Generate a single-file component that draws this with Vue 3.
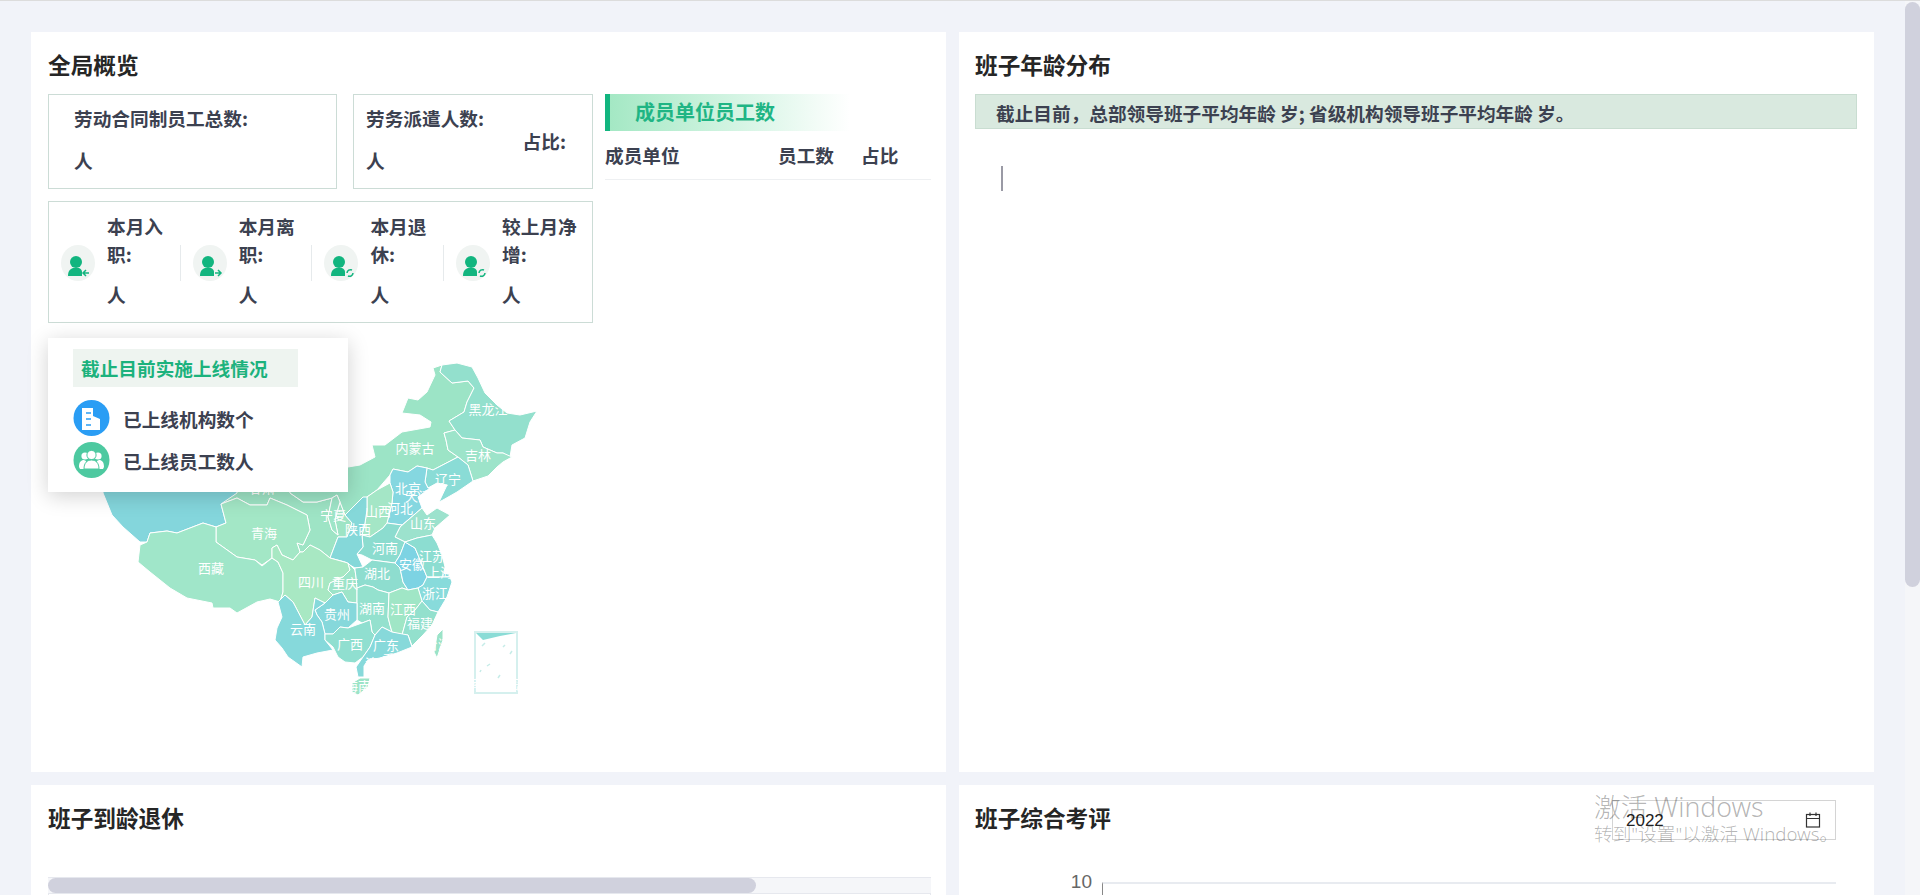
<template>
  <div class="page">
    <main class="board">
      <section class="card left">
        <h2 class="card-title">全局概览</h2>
        <div class="overview">
          <div class="overview-left">
            <div class="stat-row">
              <div class="stat-box total">
                <div>
                  <div class="line">劳动合同制员工总数:</div>
                  <div class="line value">人</div>
                </div>
              </div>
              <div class="stat-box dispatch">
                <div>
                  <div class="line">劳务派遣人数:</div>
                  <div class="line value">人</div>
                </div>
                <div class="line ratio">占比:</div>
              </div>
            </div>

            <div class="month-box">
              <div v-for="m in monthStats" :key="m.label" class="month-item">
                <svg class="person" viewBox="0 0 34 36" width="34" height="36">
                  <ellipse cx="17" cy="18" rx="17" ry="18" fill="#f0f4f2" />
                  <circle cx="15" cy="17" r="6" fill="#12b57f" />
                  <path d="M7 31c0-5 2-7 5-8h6c2 1 3 2 3 4v4z" fill="#12b57f" />
                  <path v-if="m.badge === 'in'" d="M28 28h-6m3-3-3 3 3 3" fill="none" stroke="#12b57f" stroke-width="1.5" />
                  <path v-else-if="m.badge === 'out'" d="M22 28h6m-3-3 3 3-3 3" fill="none" stroke="#12b57f" stroke-width="1.5" />
                  <path v-else d="M23 28a3.500 3.500 0 0 1 5-3M29 28a3.500 3.500 0 0 1-5 3" fill="none" stroke="#12b57f" stroke-width="1.5" />
                </svg>
                <div class="month-text">
                  <div class="line">{{ m.label }}:</div>
                  <div class="line value">人</div>
                </div>
              </div>
            </div>

            <div class="map-wrap">
              <svg class="map" viewBox="100 350 470 370" width="470" height="370">
                <g class="map-shapes">
                  <polygon
                    v-for="p in provinces"
                    :key="p.name"
                    :points="p.points"
                    :fill="p.color"
                    stroke="#fff"
                    stroke-width="1"
                    stroke-linejoin="round"
                  />
                  <rect x="475" y="632" width="42" height="61" fill="none" stroke="#d5f0ee" stroke-width="2" />
                  <polygon points="476,633 516,633 500,636 483,640" fill="#8adcd6" />
                  <path d="M482 646l3-3M503 647l2-2M487 666l3-2M510 654l2-3M498 678l2-3M480 672l1-2" stroke="#c6ece8" stroke-width="1.5" />
                </g>
                <text
                  v-for="l in mapLabels"
                  :key="l.name"
                  :x="l.x"
                  :y="l.y"
                  class="map-label"
                  text-anchor="middle"
                  dominant-baseline="central"
                >{{ l.name }}</text>
              </svg>

              <div class="online-panel">
                <div class="online-title">截止目前实施上线情况</div>
                <div class="online-row">
                  <svg viewBox="0 0 37 36" width="37" height="36">
                    <circle cx="18.500" cy="18" r="18" fill="#2a9df4" />
                    <path d="M9 8h11v8l7 3v11H9z" fill="#fff" />
                    <path d="M13 13h5M13 19h5M13 25h5" stroke="#2a9df4" stroke-width="1.600" />
                  </svg>
                  <span>已上线机构数个</span>
                </div>
                <div class="online-row">
                  <svg viewBox="0 0 37 36" width="37" height="36">
                    <circle cx="18.500" cy="18" r="18" fill="#4dc9a0" />
                    <circle cx="12" cy="14" r="3.600" fill="#fff" />
                    <circle cx="25" cy="14" r="3.600" fill="#fff" />
                    <path d="M6 25c0-5 2-7 5-7l2 1-1 8H7zM31 25c0-5-2-7-5-7l-2 1 1 8h5z" fill="#fff" />
                    <circle cx="18.500" cy="13" r="4.600" stroke="#4dc9a0" fill="#fff" />
                    <path d="M11 27c0-6 3-9 7.500-9s7.500 3 7.500 9z" stroke="#4dc9a0" fill="#fff" />
                  </svg>
                  <span>已上线员工数人</span>
                </div>
              </div>
            </div>
          </div>

          <div class="member">
            <div class="member-banner">成员单位员工数</div>
            <div class="member-head">
              <span>成员单位</span>
              <span>员工数</span>
              <span>占比</span>
            </div>
          </div>
        </div>
      </section>

      <section class="card right">
        <h2 class="card-title">班子年龄分布</h2>
        <div class="age-note">截止目前，总部领导班子平均年龄 岁; 省级机构领导班子平均年龄 岁。</div>
        <div class="age-axis"></div>
      </section>

      <section class="card left">
        <h2 class="card-title">班子到龄退休</h2>
        <div class="retire-scroll">
          <div class="retire-thumb"></div>
        </div>
        <div class="retire-table"></div>
      </section>

      <section class="card right">
        <div class="review-head">
          <h2 class="card-title flat">班子综合考评</h2>
          <div class="year-input">
            <span class="year-text">2022</span>
            <svg viewBox="0 0 16 16" width="16" height="16" fill="none" stroke="#333" stroke-width="1.200">
              <rect x="1.500" y="2.500" width="13" height="12.500" />
              <path d="M1.500 6.500h13M5 .5v3.500M11 .5v3.500" />
            </svg>
          </div>
        </div>
        <div class="chart">
          <span class="tick">10</span>
          <div class="plot"></div>
        </div>
      </section>
    </main>

    <aside class="scrollbar"><div class="scroll-thumb"></div></aside>

    <div class="watermark">
      <div class="wm-big">激活 Windows</div>
      <div class="wm-small">转到"设置"以激活 Windows。</div>
    </div>
  </div>
</template>

<script setup>
const monthStats = [
  { label: '本月入职', badge: 'in' },
  { label: '本月离职', badge: 'out' },
  { label: '本月退休', badge: 'cycle' },
  { label: '较上月净增', badge: 'cycle' }
]

const provinces = [
  { name: '甘肃', color: '#9ee4c5', points: '237,480 290,480 290,493 303,502 317,502 332,498 328,517 332,530 338,535 335,520 337,512 340,502 345,515 352,523 347,537 338,537 330,558 320,550 310,545 303,552 300,552 297,543 303,545 310,530 307,515 287,505 270,498 267,505 250,505 237,498 221,504 222,490' },
  { name: '内蒙古', color: '#9ce4c6', points: '433,368 442,365 440,372 452,383 468,381 474,388 467,402 464,412 449,421 455,430 444,433 446,440 448,450 458,457 433,470 427,468 417,466 408,472 393,469 390,475 377,490 367,497 355,505 345,515 340,502 337,495 332,498 317,502 303,502 290,493 290,470 348,467 360,465 375,457 372,445 385,445 402,432 430,427 431,422 420,415 402,413 408,398 418,400 427,392 435,375' },
  { name: '黑龙江', color: '#93e0cd', points: '442,365 457,363 472,367 478,378 485,393 497,405 507,413 520,415 537,411 530,422 525,438 512,445 510,457 503,453 497,453 483,447 480,440 462,438 455,430 449,421 464,412 467,402 474,388 468,381 452,383 440,372' },
  { name: '吉林', color: '#9de4ca', points: '444,433 455,430 462,438 480,440 483,447 497,453 503,453 512,457 503,462 497,467 488,476 473,481 468,465 458,457 448,450 446,440' },
  { name: '辽宁', color: '#8adcd6', points: '427,468 433,470 458,457 468,465 473,481 457,492 443,500 439,502 447,485 437,483 428,488 425,482' },
  { name: '河北', color: '#85d7e0', points: '390,475 393,469 408,472 417,466 427,468 425,482 428,488 430,488 418,497 422,508 402,525 387,523 392,503 393,492 390,483' },
  { name: '山西', color: '#a4e6c6', points: '367,497 377,490 390,483 393,492 392,503 387,523 383,528 370,537 362,535 365,523 367,510' },
  { name: '山东', color: '#9ce2cd', points: '400,527 422,508 427,515 437,508 450,515 435,528 432,535 417,538 405,542 395,537' },
  { name: '河南', color: '#8cdccf', points: '370,537 383,528 387,523 402,525 400,527 395,537 405,542 400,555 395,563 387,562 372,560 362,555 357,554 363,547 362,535' },
  { name: '陕西', color: '#85d8d9', points: '363,497 367,497 367,510 365,523 362,535 363,547 357,554 363,567 355,568 345,562 330,558 338,537 347,537 352,523 345,515 355,505' },
  { name: '宁夏', color: '#9fe5c8', points: '332,498 337,495 340,502 337,512 335,520 338,535 332,530 328,517' },
  { name: '新疆', color: '#84d6dc', points: '103,470 237,470 237,493 221,504 226,523 216,527 203,523 177,533 167,531 150,533 147,542 140,542 123,527 112,515 103,493' },
  { name: '青海', color: '#a3e7c6', points: '221,504 237,498 250,505 267,505 270,498 287,505 307,515 310,530 303,545 297,543 300,552 293,560 282,555 277,545 272,548 272,558 262,565 255,560 237,557 216,542 216,527 226,523' },
  { name: '西藏', color: '#a0e6c9', points: '140,545 147,542 150,533 167,531 177,533 203,523 216,527 216,542 237,557 255,560 262,566 272,558 278,562 283,573 283,592 280,602 270,599 257,602 237,613 230,608 213,608 212,603 187,598 170,588 150,572 138,562' },
  { name: '四川', color: '#a8e8c3', points: '272,548 277,545 282,555 293,560 300,552 303,552 310,545 320,550 330,558 348,563 350,570 343,577 330,583 328,590 333,595 325,603 315,598 312,617 305,625 293,602 285,595 280,602 283,592 283,573 278,562 272,558' },
  { name: '重庆', color: '#9de4c9', points: '348,563 355,570 356,577 357,588 357,603 348,602 342,592 333,595 328,590 330,583 343,577 350,570' },
  { name: '湖北', color: '#8eddcf', points: '355,568 363,567 372,560 387,562 395,563 400,568 403,582 408,590 402,588 389,593 378,590 373,587 365,585 357,588 356,577 355,570' },
  { name: '安徽', color: '#7dd3e3', points: '400,555 405,542 415,548 418,555 422,565 427,577 423,585 418,588 408,590 403,582 400,568 395,563' },
  { name: '江苏', color: '#8cddd1', points: '405,542 417,538 432,535 437,543 442,555 445,567 443,577 427,577 422,565 418,555 415,548' },
  { name: '上海', color: '#85d8dc', points: '443,572 449,574 450,577 443,577' },
  { name: '浙江', color: '#88dbdb', points: '423,585 427,577 450,577 452,582 447,597 438,612 430,610 422,601 418,588' },
  { name: '湖南', color: '#94e1ce', points: '357,603 357,588 365,585 373,587 378,590 389,593 388,617 390,625 392,632 382,627 375,635 372,632 370,620 362,623 357,620' },
  { name: '江西', color: '#a0e6c6', points: '389,593 402,588 408,590 418,588 422,601 415,610 407,617 402,635 392,632 390,625 388,617' },
  { name: '福建', color: '#93e0cd', points: '422,601 430,610 438,612 432,625 423,635 412,646 408,635 402,635 407,617 415,610' },
  { name: '贵州', color: '#86d8db', points: '315,610 325,603 333,595 342,592 348,602 357,603 357,620 348,628 340,627 333,634 325,634 322,622 317,615' },
  { name: '云南', color: '#86d9db', points: '278,602 285,595 293,602 305,625 312,617 315,598 325,603 315,610 317,615 322,622 325,634 325,640 333,650 317,653 303,657 302,667 288,657 282,648 275,640 277,628 282,617' },
  { name: '广西', color: '#90dfd0', points: '325,634 333,634 340,627 348,628 362,623 370,620 372,632 375,635 370,647 363,657 355,663 345,662 338,657 333,647 325,640' },
  { name: '广东', color: '#87d9da', points: '375,635 382,627 392,632 408,635 412,647 397,653 380,658 368,660 364,666 364,677 358,677 356,667 363,657 370,647' },
  { name: '海南', color: '#9ce4c7', points: '352,683 360,678 370,678 368,687 358,695 352,692' },
  { name: '台湾', color: '#9be3c8', points: '435,647 437,635 443,629 443,640 437,658 434,652' }
]

const mapLabels = [
  { name: '甘肃', x: 262, y: 487 },
  { name: '内蒙古', x: 415, y: 447 },
  { name: '黑龙江', x: 488, y: 408 },
  { name: '吉林', x: 478, y: 454 },
  { name: '辽宁', x: 448, y: 478 },
  { name: '北京', x: 408, y: 487 },
  { name: '天津', x: 418, y: 495 },
  { name: '河北', x: 400, y: 507 },
  { name: '山西', x: 378, y: 510 },
  { name: '宁夏', x: 333, y: 514 },
  { name: '陕西', x: 358, y: 528 },
  { name: '山东', x: 423, y: 522 },
  { name: '河南', x: 385, y: 547 },
  { name: '江苏', x: 432, y: 555 },
  { name: '安徽', x: 412, y: 563 },
  { name: '上海', x: 440, y: 571 },
  { name: '浙江', x: 435, y: 592 },
  { name: '湖北', x: 377, y: 572 },
  { name: '四川', x: 311, y: 581 },
  { name: '重庆', x: 345, y: 582 },
  { name: '湖南', x: 372, y: 607 },
  { name: '江西', x: 403, y: 608 },
  { name: '福建', x: 420, y: 622 },
  { name: '贵州', x: 337, y: 613 },
  { name: '云南', x: 303, y: 628 },
  { name: '广西', x: 350, y: 643 },
  { name: '广东', x: 386, y: 644 },
  { name: '澳门', x: 378, y: 662 },
  { name: '香港', x: 395, y: 658 },
  { name: '海南', x: 358, y: 685 },
  { name: '台湾', x: 438, y: 643 },
  { name: '青海', x: 264, y: 532 },
  { name: '西藏', x: 211, y: 567 },
  { name: '南海诸岛', x: 496, y: 683 }
]
</script>

<style>
html,
body {
  margin: 0;
  height: 100%;
  overflow: hidden;
}
</style>

<style scoped>
.page {
  position: relative;
  display: flex;
  height: 895px;
  overflow: hidden;
  box-sizing: border-box;
  border-top: 1px solid #dcdcdc;
  background: #f1f3f9;
  font-family: "Noto Sans CJK SC", "Noto Sans", sans-serif;
  color: #3c4150;
}
.board {
  flex: 1;
  display: grid;
  grid-template-columns: 915px 915px;
  grid-auto-rows: 740px;
  gap: 13px;
  padding: 31px 31px 0;
  align-content: start;
}
.scrollbar {
  width: 15px;
  background: #f5f6f9;
}
.scroll-thumb {
  height: 585px;
  margin-top: 1px;
  background: #d0d1dd;
  border-radius: 8px;
}
.card {
  background: #fff;
  padding: 18px 15px 16px 17px;
  box-sizing: border-box;
}
.card.right {
  padding: 18px 17px 16px 16px;
}
.card-title {
  margin: 0 0 14px;
  font-size: 22.67px;
  line-height: 30px;
  font-weight: 700;
  color: #262626;
}
.card-title.flat {
  margin: 0;
}
.overview {
  display: flex;
  gap: 12px;
}
.overview-left {
  width: 545px;
  flex: none;
}
.stat-row {
  display: flex;
  gap: 16px;
}
.line {
  font-size: 18.67px;
  line-height: 28px;
  font-weight: 700;
}
.value {
  margin-top: 14px;
}
.stat-box {
  box-sizing: border-box;
  height: 95px;
  border: 1px solid #ccdcd6;
  padding-top: 9px;
  display: flex;
}
.total {
  width: 289px;
  padding-left: 25px;
}
.dispatch {
  width: 240px;
  padding-left: 12px;
  padding-right: 26px;
  justify-content: space-between;
  align-items: flex-start;
}
.ratio {
  align-self: center;
  margin-bottom: 10px;
}
.month-box {
  margin-top: 12px;
  box-sizing: border-box;
  height: 122px;
  border: 1px solid #ccdcd6;
  padding: 0 0 0 12px;
  display: flex;
  gap: 12px;
  align-items: center;
}
.month-item {
  position: relative;
  display: flex;
  align-items: center;
  width: 119.7px;
  flex: none;
}
.month-item:not(:last-child)::after {
  content: "";
  position: absolute;
  right: 0;
  top: 50%;
  margin-top: -17px;
  height: 36px;
  width: 1px;
  background: #e6eaec;
}
.person {
  flex: none;
  margin: 2px 12px 0 0;
}
.month-text {
  width: 76px;
  flex: none;
  margin-top: -4px;
}
.month-text .value {
  margin-top: 12px;
}
.map-wrap {
  position: relative;
  width: 545px;
  padding-top: 27px;
}
.map {
  display: block;
  margin-left: 52px;
}
.map-shapes {
  filter: blur(0.3px);
}
.map-label {
  font-size: 13px;
  fill: #fff;
}
.online-panel {
  position: absolute;
  left: 0;
  top: 15px;
  width: 300px;
  height: 154px;
  box-sizing: border-box;
  padding: 11px 25px;
  background: #fff;
  box-shadow: 0 4px 20px rgba(0, 0, 0, 0.18);
}
.online-title {
  width: 225px;
  height: 38px;
  box-sizing: border-box;
  padding-left: 8px;
  line-height: 38px;
  font-size: 18.67px;
  font-weight: 700;
  color: #1cb27d;
  background: #eef4f0;
}
.online-row {
  display: flex;
  align-items: center;
  gap: 13px;
  margin-top: 6px;
  font-size: 18.67px;
  font-weight: 700;
}
.online-title + .online-row {
  margin-top: 13px;
}
.member {
  flex: 1;
  min-width: 0;
}
.member-banner {
  width: 245px;
  height: 37px;
  box-sizing: border-box;
  padding-left: 25px;
  border-left: 5px solid #12b57f;
  line-height: 35px;
  font-size: 20px;
  font-weight: 700;
  color: #1fb584;
  background: linear-gradient(90deg, #a4e8c4, #ffffff);
}
.member-head {
  display: grid;
  grid-template-columns: 173px 83px 1fr;
  height: 49px;
  align-items: center;
  box-sizing: border-box;
  padding-bottom: 2px;
  border-bottom: 1px solid #eef0f2;
  font-size: 18.67px;
  font-weight: 700;
}
.age-note {
  height: 35px;
  box-sizing: border-box;
  padding-left: 20px;
  border: 1px solid #c9ddd1;
  background: #d9e9df;
  line-height: 35px;
  font-size: 18.67px;
  font-weight: 700;
}
.age-axis {
  width: 2px;
  height: 25px;
  margin: 37px 0 0 26px;
  background: #9a9aa5;
}
.retire-scroll {
  height: 16px;
  margin-top: 44px;
  box-sizing: border-box;
  border-top: 1px solid #e6e8ee;
  background: #f5f6f9;
}
.retire-thumb {
  width: 708px;
  height: 15px;
  background: #d0d1dd;
  border-radius: 8px;
}
.retire-table {
  height: 200px;
  border: 1px solid #e6e8ee;
}
.review-head {
  height: 30px;
  display: flex;
  align-items: center;
  justify-content: space-between;
}
.year-input {
  width: 224px;
  height: 40px;
  margin: 4px 21px 0 0;
  box-sizing: border-box;
  border: 1px solid #d4d4d4;
  padding: 0 14px 0 13px;
  display: flex;
  align-items: center;
  justify-content: space-between;
  font-family: "Liberation Sans", sans-serif;
  font-size: 17px;
  color: #222;
}
.year-text {
  padding-top: 2px;
}
.chart {
  display: flex;
  gap: 10px;
  margin-top: 39px;
}
.tick {
  width: 117px;
  text-align: right;
  font-family: "Liberation Sans", sans-serif;
  font-size: 19px;
  line-height: 20px;
  color: #666;
}
.plot {
  flex: 1;
  height: 200px;
  margin: 10px 21px 0 0;
  box-sizing: border-box;
  border-top: 2px solid #e8ebf0;
  border-left: 1px solid #888;
}
.watermark {
  position: absolute;
  left: 1594px;
  top: 789px;
  font-family: "Noto Sans", "Noto Sans CJK SC", sans-serif;
  color: rgba(0, 0, 0, 0.3);
  pointer-events: none;
}
.wm-big {
  font-size: 26.67px;
  line-height: 34px;
  font-weight: 300;
}
.wm-small {
  font-size: 18.67px;
  line-height: 20px;
  font-weight: 300;
}
</style>
